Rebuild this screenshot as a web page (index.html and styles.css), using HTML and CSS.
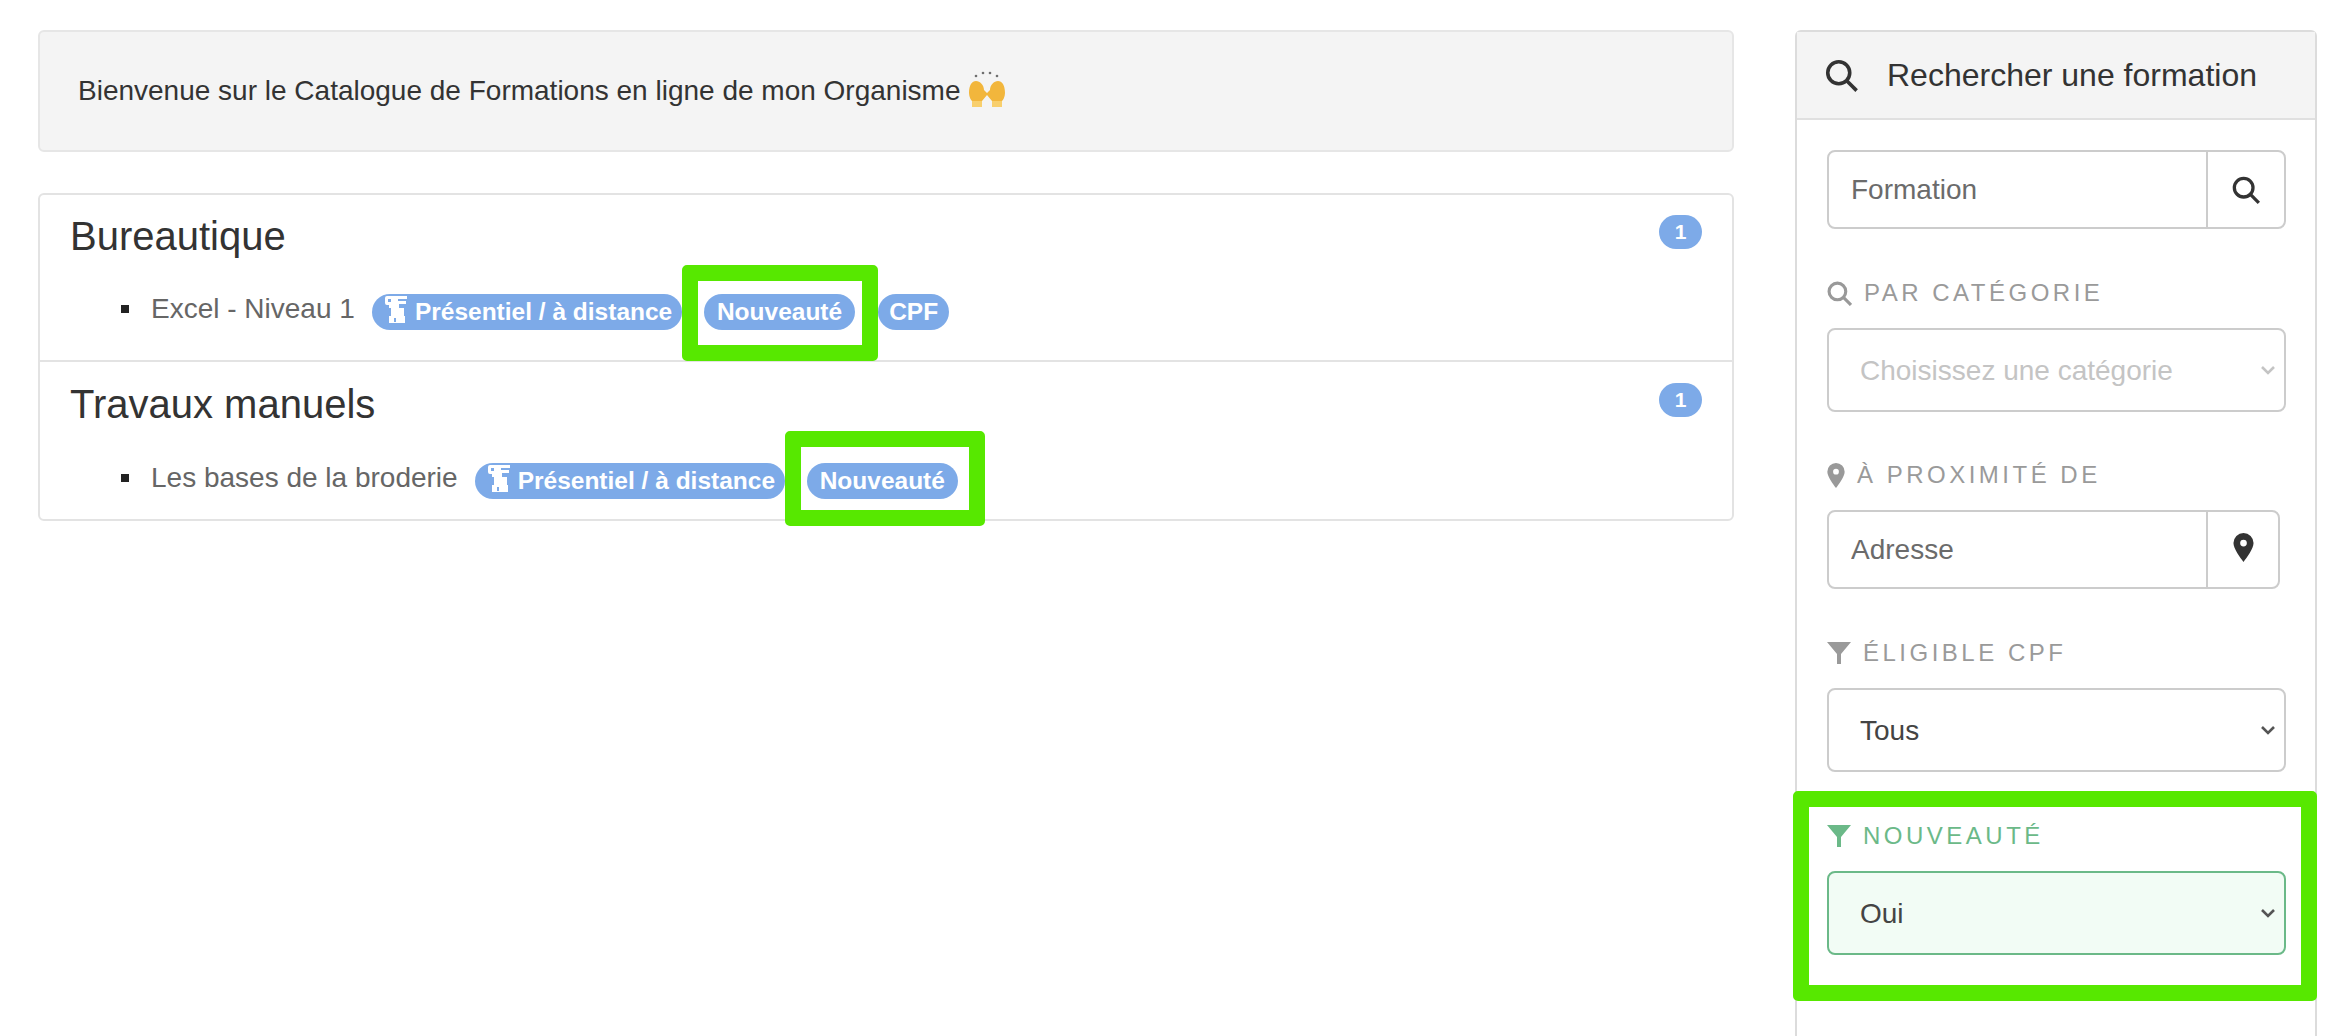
FILE: index.html
```html
<!DOCTYPE html>
<html lang="fr">
<head>
    <meta charset="UTF-8">
    <title>Catalogue de Formations</title>
    <link rel="stylesheet" href="styles.css">
</head>
<body>
    <div class="page">
        <main class="content">
            <div class="welcome">
                <span>Bienvenue sur le Catalogue de Formations en ligne de mon Organisme</span>
                <svg class="hands" viewBox="0 0 36 36">
                    <g fill="#6f6f6f"><circle cx="7" cy="5" r="1.3"/><circle cx="14" cy="2" r="1.3"/><circle cx="21" cy="2" r="1.3"/><circle cx="28" cy="5" r="1.3"/></g>
                    <path fill="#f2b63c" d="M0 22C0 14 3 10 7 10s8 4 8 9l3 3 3-3c0-5 4-9 8-9s7 4 7 12c0 4-2 7-3 8v6H23v-6l-5-6-5 6v6H3v-6c-1-1-3-4-3-8z"/>
                    <path fill="#f8cf6d" d="M3 30h10v6H3zM23 30h10v6H23z"/>
                </svg>
            </div>

            <div class="category-list">
                <section class="category">
                    <div class="category-head">
                        <h4>Bureautique</h4>
                        <span class="count">1</span>
                    </div>
                    <ul>
                        <li>
                            <span class="training-name">Excel - Niveau 1</span>
                            <span class="pill pill-first">
                                <svg class="scroll-icon" viewBox="0 0 22 27"><path fill="#fff" fill-rule="evenodd" d="M2 0h20v3h-9v2h8v3h-7v4h5v8h1v7H4v-7h2v-8H4V9H2a2 2 0 0 1-2-2V2a2 2 0 0 1 2-2zm1 3v3h3V3zm6 19v4h2v-4z"/></svg>
                                Présentiel / à distance
                            </span>
                            <span class="pill pill-new frame-one">Nouveauté</span>
                            <span class="pill pill-cpf">CPF</span>
                        </li>
                    </ul>
                </section>
                <section class="category">
                    <div class="category-head">
                        <h4>Travaux manuels</h4>
                        <span class="count">1</span>
                    </div>
                    <ul>
                        <li>
                            <span class="training-name">Les bases de la broderie</span>
                            <span class="pill pill-first">
                                <svg class="scroll-icon" viewBox="0 0 22 27"><path fill="#fff" fill-rule="evenodd" d="M2 0h20v3h-9v2h8v3h-7v4h5v8h1v7H4v-7h2v-8H4V9H2a2 2 0 0 1-2-2V2a2 2 0 0 1 2-2zm1 3v3h3V3zm6 19v4h2v-4z"/></svg>
                                Présentiel / à distance
                            </span>
                            <span class="pill pill-new frame-two">Nouveauté</span>
                        </li>
                    </ul>
                </section>
            </div>
        </main>

        <aside class="sidebar">
            <div class="sidebar-head">
                <svg class="icon icon-head" viewBox="0 0 24 24"><circle cx="10" cy="10" r="8"/><path d="M16 16l7 7"/></svg>
                <span>Rechercher une formation</span>
            </div>
            <div class="sidebar-body">
                <div class="input-group group-search">
                    <input type="text" placeholder="Formation">
                    <button type="button"><svg class="icon icon-btn" viewBox="0 0 24 24"><circle cx="10" cy="10" r="8"/><path d="M16 16l7 7"/></svg></button>
                </div>

                <label class="filter-label label-cat">
                    <svg class="icon icon-label" viewBox="0 0 24 24"><circle cx="10" cy="10" r="8"/><path d="M16 16l7 7"/></svg>
                    Par catégorie
                </label>
                <select class="select select-muted"><option>Choisissez une catégorie</option></select>

                <label class="filter-label label-near">
                    <svg class="pin pin-label" viewBox="0 0 18 26"><path fill-rule="evenodd" d="M9 0a9 9 0 0 1 9 9c0 5-6 13-9 17C6 22 0 14 0 9a9 9 0 0 1 9-9zm0 6a3 3 0 1 0 0 6 3 3 0 0 0 0-6z"/></svg>
                    À proximité de
                </label>
                <div class="input-group group-address">
                    <input type="text" placeholder="Adresse">
                    <button type="button"><svg class="pin pin-btn" viewBox="0 0 18 26"><path fill-rule="evenodd" d="M9 0a9 9 0 0 1 9 9c0 5-6 13-9 17C6 22 0 14 0 9a9 9 0 0 1 9-9zm0 6a3 3 0 1 0 0 6 3 3 0 0 0 0-6z"/></svg></button>
                </div>

                <label class="filter-label label-cpf">
                    <svg class="funnel" viewBox="0 0 24 22"><path d="M0 0h24L14 12v10h-4V12z"/></svg>
                    Éligible CPF
                </label>
                <select class="select"><option>Tous</option></select>

                <div class="filter-new">
                    <label class="filter-label label-new">
                        <svg class="funnel" viewBox="0 0 24 22"><path d="M0 0h24L14 12v10h-4V12z"/></svg>
                        Nouveauté
                    </label>
                    <select class="select select-active"><option>Oui</option></select>
                </div>
            </div>
        </aside>
    </div>
</body>
</html>
```

FILE: styles.css
```css
html, body {
    margin: 0;
    padding: 0;
    height: 100%;
    overflow: hidden;
}

body {
    font-family: "Liberation Sans", Arial, sans-serif;
    font-size: 28px;
    color: #333;
    background-color: #fff;
}

.page {
    display: flex;
    height: 1036px;
    padding: 30px 23px 0 38px;
    box-sizing: border-box;
}

.content {
    width: 1696px;
    margin-right: 61px;
}

/* Welcome box */
.welcome {
    display: flex;
    align-items: center;
    height: 122px;
    box-sizing: border-box;
    padding: 0 38px;
    background-color: #f4f4f4;
    border: 2px solid #e6e6e6;
    border-radius: 6px;
    color: #333;
}

.hands {
    width: 36px;
    height: 36px;
    margin-left: 8px;
    margin-top: -4px;
}

/* Categories */
.category-list {
    margin-top: 41px;
    border: 2px solid #e3e3e3;
    border-radius: 6px;
}

.category {
    height: 165px;
    box-sizing: border-box;
    padding: 20px 30px 0 30px;
}

.category + .category {
    height: 159px;
    padding-top: 21px;
    border-top: 2px solid #e3e3e3;
}

.category-head {
    display: flex;
    justify-content: space-between;
    align-items: flex-start;
}

h4 {
    margin: -1px 0 0;
    font-size: 40px;
    font-weight: 400;
    line-height: 44px;
    color: #333;
}

.count {
    width: 43px;
    height: 34px;
    border-radius: 17px;
    background-color: #7daae8;
    color: #fff;
    font-size: 21px;
    font-weight: 700;
    line-height: 34px;
    text-align: center;
}

ul {
    margin: 35px 0 0;
    padding: 0 0 0 81px;
    list-style: none;
}

.category + .category ul {
    margin-top: 36px;
}

li {
    display: flex;
    align-items: center;
    height: 37px;
    position: relative;
}

li::before {
    content: "";
    position: absolute;
    left: -30px;
    top: 12px;
    width: 8px;
    height: 8px;
    background-color: #222;
}

.training-name {
    color: #666;
    font-size: 28px;
    margin-bottom: 6px;
    margin-right: 17px;
}

.pill {
    position: relative;
    display: flex;
    align-items: center;
    height: 36px;
    padding: 0 13px;
    border-radius: 18px;
    background-color: #7daae8;
    color: #fff;
    font-size: 24.5px;
    font-weight: 700;
    white-space: nowrap;
}

.pill-first {
    width: 310px;
    box-sizing: border-box;
    padding: 0 0 0 13px;
    gap: 8px;
}

.pill-new {
    margin-left: 22px;
    margin-right: 23px;
}

.pill-cpf {
    padding: 0 11px;
}

.scroll-icon {
    width: 22px;
    height: 27px;
    margin-top: -4px;
}

/* Green highlight frames, drawn over the page */
.frame-one::after,
.frame-two::after,
.filter-new::after {
    content: "";
    position: absolute;
    border: 16px solid #57e800;
    border-radius: 5px;
    pointer-events: none;
}

.frame-one::after {
    left: -22px;
    right: -23px;
    top: -29px;
    bottom: -31px;
}

.frame-two::after {
    left: -22px;
    right: -27px;
    top: -32px;
    bottom: -27px;
}

/* Sidebar */
.sidebar {
    width: 522px;
    height: 1040px;
    box-sizing: border-box;
    border: 2px solid #dcdcdc;
    border-radius: 6px 6px 0 0;
}

.sidebar-head {
    display: flex;
    align-items: center;
    height: 88px;
    box-sizing: border-box;
    padding-left: 28px;
    background-color: #f4f4f4;
    border-bottom: 2px solid #e0e0e0;
    font-size: 32px;
    color: #333;
}

.icon {
    fill: none;
    stroke: currentColor;
    stroke-width: 3;
}

.icon-head {
    width: 33px;
    height: 33px;
    margin-right: 29px;
    stroke-width: 2.6;
}

.sidebar-body {
    padding: 30px 29px 0 30px;
}

.input-group {
    display: flex;
    height: 79px;
    box-sizing: border-box;
    border: 2px solid #ccc;
    border-radius: 8px;
    background-color: #fff;
}

.input-group input {
    flex: 1;
    min-width: 0;
    border: 0;
    outline: 0;
    background: transparent;
    padding: 0 0 0 22px;
    font-family: inherit;
    font-size: 28px;
    color: #555;
    border-radius: 8px;
}

.input-group input::placeholder {
    color: #6b6b6b;
    opacity: 1;
}

.input-group button {
    width: 78px;
    border: 0;
    border-left: 2px solid #ccc;
    background: transparent;
    padding: 0;
    color: #333;
    display: flex;
    align-items: center;
    justify-content: center;
}

.group-address {
    width: 453px;
    margin-top: 20px;
}

.group-address button {
    width: 72px;
}

.icon-btn {
    width: 28px;
    height: 28px;
    stroke-width: 2.8;
}

.pin {
    fill: currentColor;
}

.pin-btn {
    width: 21px;
    height: 29px;
    margin-top: -5px;
    color: #333;
}

.filter-label {
    display: flex;
    align-items: center;
    gap: 12px;
    height: 30px;
    font-size: 24px;
    letter-spacing: 3.5px;
    text-transform: uppercase;
    color: #9a9a9a;
}

.label-cat {
    margin-top: 49px;
}

.label-near {
    margin-top: 48px;
}

.label-cpf {
    margin-top: 49px;
}

.icon-label {
    width: 25px;
    height: 25px;
    color: #999;
}

.pin-label {
    width: 18px;
    height: 25px;
    color: #999;
}

.funnel {
    width: 24px;
    height: 22px;
    fill: currentColor;
}

.select {
    display: block;
    width: 459px;
    height: 84px;
    margin-top: 20px;
    box-sizing: border-box;
    padding: 0 0 0 31px;
    border: 2px solid #ccc;
    border-radius: 8px;
    font-family: inherit;
    font-size: 28px;
    color: #444;
    appearance: none;
    background-color: #fff;
    background-image: url("data:image/svg+xml,%3Csvg xmlns='http://www.w3.org/2000/svg' viewBox='0 0 16 10'%3E%3Cpath d='M2 2l6 6 6-6' fill='none' stroke='%23555' stroke-width='2.6'/%3E%3C/svg%3E");
    background-repeat: no-repeat;
    background-position: right 8px center;
    background-size: 16px 10px;
}

.select-muted {
    color: #c4c4c4;
    background-image: url("data:image/svg+xml,%3Csvg xmlns='http://www.w3.org/2000/svg' viewBox='0 0 16 10'%3E%3Cpath d='M2 2l6 6 6-6' fill='none' stroke='%23c4c4c4' stroke-width='2.6'/%3E%3C/svg%3E");
}

.filter-new {
    position: relative;
    margin-top: 49px;
}

.filter-new::after {
    left: -34px;
    right: -31px;
    top: -30px;
    bottom: -46px;
}

.label-new {
    color: #6bb988;
}

.select-active {
    background-color: #f2fcf5;
    border-color: #6bb988;
}
```
